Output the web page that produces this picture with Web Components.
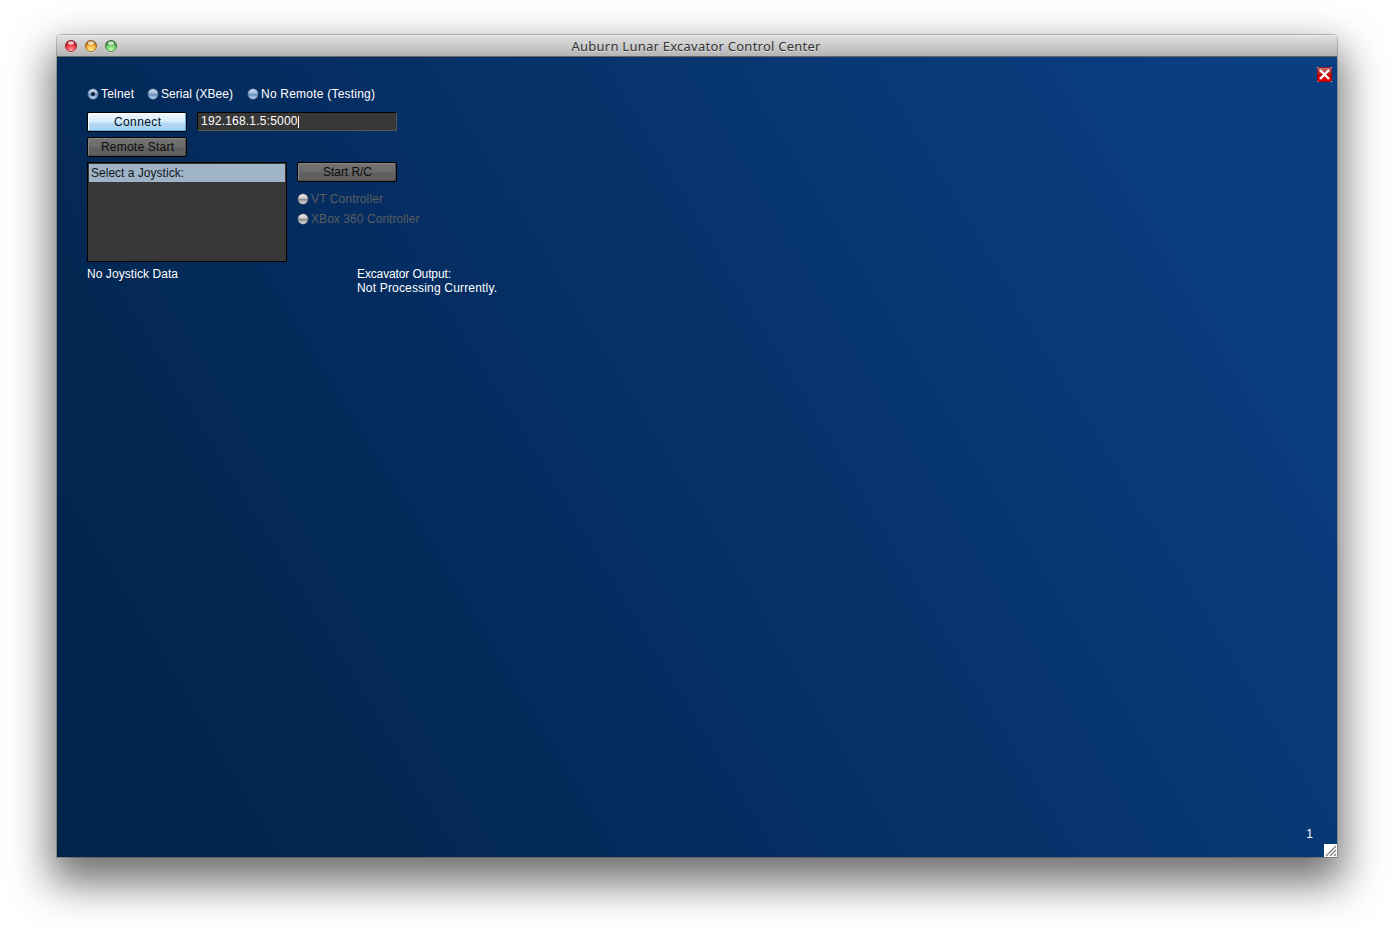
<!DOCTYPE html>
<html lang="en"><head><meta charset="utf-8"><title>Auburn Lunar Excavator Control Center</title>
<style>html,body{margin:0;background:#fff;height:936px;overflow:hidden}body{font:12px/14px "Liberation Sans",Arial,sans-serif}</style></head>
<body>
<control-center></control-center>
<script>
// Text run whose tracking is set so that it spans a given width.
class TrackedText extends HTMLElement{
  connectedCallback(){
    const r=this.attachShadow({mode:'open'});
    r.innerHTML='<style>:host{display:inline-block;white-space:nowrap}span{display:inline-block}</style><span><slot></slot></span>';
    const s=r.querySelector('span'),w=+this.getAttribute('width'),n=this.textContent.length;
    if(w&&n>1){const d=(w-s.getBoundingClientRect().width)/(n-1);s.style.letterSpacing=d+'px';s.style.marginRight=-d+'px';}
  }
}
customElements.define('tracked-text',TrackedText);
class RadioOption extends HTMLElement{
  connectedCallback(){
    const off=this.hasAttribute('disabled'),on=this.hasAttribute('checked');
    this.attachShadow({mode:'open'}).innerHTML=`<style>
    :host{display:flex;align-items:center;height:14px;color:${off?'#5b5d61':'#fff'}}
    svg{width:12px;height:12px;flex:none;margin-right:2px}</style>
    <svg viewBox="0 0 12 12"><defs><linearGradient id="g" x2="0" y2="1">${off?
    '<stop stop-color="#f4f4f4"/><stop offset=".42" stop-color="#cacaca"/><stop offset=".55" stop-color="#8c8c8c"/><stop offset="1" stop-color="#eee"/>':
    '<stop stop-color="#d5e3f2"/><stop offset=".42" stop-color="#9db9d8"/><stop offset=".55" stop-color="#668fbd"/><stop offset="1" stop-color="#c5def4"/>'}
    </linearGradient></defs><circle cx="6" cy="6" r="5.2" fill="url(#g)" stroke="${off?'#484b50':'#476487'}" stroke-width=".6"/>${on?'<circle cx="6" cy="6" r="2" fill="#071d38"/>':''}</svg><slot></slot>`;
  }
}
customElements.define('radio-option',RadioOption);
class PushButton extends HTMLElement{
  connectedCallback(){
    const p=this.hasAttribute('primary');
    this.attachShadow({mode:'open'}).innerHTML=`<style>
    :host{display:flex;justify-content:center;box-sizing:border-box;width:100px;height:20px;border:1px solid #000;border-radius:2px;padding:2px 0 0 1px;line-height:14px;color:${p?'#001020':'#0c0c0c'};
    background:${p?'linear-gradient(#f0f8fe,#d6ebfa 50%,#b5d9f4 56%,#a4d1f2)':'linear-gradient(#747474,#6b6b6b 49%,#5e5e5e 56%,#606060)'};
    box-shadow:${p?'inset 1px 1px #fff,inset -1px -1px #63b0e8':'inset 1px 1px #858585,inset -1px -1px #505050'}}</style><slot></slot>`;
  }
}
customElements.define('push-button',PushButton);
class TextEntry extends HTMLElement{
  connectedCallback(){
    this.attachShadow({mode:'open'}).innerHTML=`<style>
    :host{display:flex;box-sizing:border-box;width:200px;height:19px;border:1px solid;border-color:#000 #555 #555 #000;background:#383838;color:#fff;padding:1px 0 0 3px;line-height:14px}
    i{width:1px;height:12px;margin-top:2px;background:#fff}</style><slot></slot><i></i>`;
  }
}
customElements.define('text-entry',TextEntry);
class SelectList extends HTMLElement{
  connectedCallback(){
    this.attachShadow({mode:'open'}).innerHTML=`<style>
    :host{display:block;box-sizing:border-box;width:200px;height:100px;border:1px solid #000;background:#383838;padding:1px}
    div{height:16px;padding:2px 0 0 2px;line-height:14px;background:#a0b4c8;color:#101820}</style><div><slot></slot></div>`;
  }
}
customElements.define('select-list',SelectList);
class TitleBar extends HTMLElement{
  connectedCallback(){
    const light=(id,a,b,c)=>`<svg viewBox="0 0 14 14"><defs><radialGradient id="${id}" cy=".88" r=".8"><stop stop-color="${a}"/><stop offset=".6" stop-color="${b}"/><stop offset="1" stop-color="${c}"/></radialGradient></defs><circle cx="7" cy="7.6" r="6" fill="#eee"/><circle cx="7" cy="7" r="5.6" fill="url(#${id})" stroke="${c}" stroke-width=".8"/><ellipse cx="7" cy="4" rx="3" ry="1.7" fill="#fff" opacity=".75"/></svg>`;
    this.attachShadow({mode:'open'}).innerHTML=`<style>
    :host{display:grid;grid-template-columns:89px 1fr 91px;height:22px;box-sizing:border-box;border-bottom:1px solid #666;border-radius:4px 4px 0 0;background:linear-gradient(#f0f0f0,#dedede 8%,#b4b4b4);font:13px/22px "Lucida Grande","Noto Sans","Open Sans",sans-serif;color:#333;text-shadow:0 1px rgba(255,255,255,.5)}
    nav{display:flex;gap:6px;padding:4px 0 0 7px}svg{width:14px;height:14px}div{text-align:center}</style>
    <nav>${light('r','#ffabab','#f03440','#8a1720')}${light('y','#fff19d','#f4ae3a','#8d5817')}${light('v','#ceffb2','#70cc6b','#286b2a')}</nav><div><slot></slot></div>`;
  }
}
customElements.define('title-bar',TitleBar);
class ControlCenter extends HTMLElement{
  connectedCallback(){
    this.attachShadow({mode:'open'}).innerHTML=`<style>
    :host{display:block;padding:35px 57px 79px}
    .window{width:1280px;height:822px;border-radius:4px 4px 0 0;box-shadow:0 0 0 1px rgba(0,0,0,.22),0 20px 42px 6px rgba(0,0,0,.56)}
    main{height:800px;display:grid;grid-template-columns:1fr 14px;background:linear-gradient(59deg,#02234a,#032750 18%,#052d61 40%,#07346d 60%,#0a3d80 88%,#0a3e83)}
    .panel{padding:30px 0 0 30px;color:#fff}
    .radios{display:flex;height:14px}.radios>:nth-child(1){width:60px}.radios>:nth-child(2){width:100px}
    .row{display:flex;gap:10px}.connect{margin-top:11px}.remote{margin-top:5px}.joy{margin-top:5px}
    .side radio-option{margin-top:10px}.side radio-option+radio-option{margin-top:6px}
    .output{display:grid;grid-template-columns:270px auto;margin-top:5px;line-height:14px}.output div{display:flex;flex-direction:column;align-items:flex-start}
    aside{display:flex;flex-direction:column;justify-content:space-between;padding:10px 0 0;align-items:flex-end}
    svg{display:block}.close{margin-right:5px}.foot{display:flex;flex-direction:column;align-items:flex-end;color:#fff}.foot span{margin:0 24px 3px 0}
    </style>
    <div class="window"><title-bar><tracked-text width="249">Auburn Lunar Excavator Control Center</tracked-text></title-bar>
    <main><section class="panel">
      <div class="radios"><radio-option checked><tracked-text width="33">Telnet</tracked-text></radio-option><radio-option><tracked-text width="72">Serial (XBee)</tracked-text></radio-option><radio-option><tracked-text width="114">No Remote (Testing)</tracked-text></radio-option></div>
      <div class="row connect"><push-button primary><tracked-text width="47">Connect</tracked-text></push-button><text-entry><tracked-text width="96.5">192.168.1.5:5000</tracked-text></text-entry></div>
      <push-button class="remote"><tracked-text width="73">Remote Start</tracked-text></push-button>
      <div class="row joy"><select-list><tracked-text width="93">Select a Joystick:</tracked-text></select-list>
      <div class="side"><push-button><tracked-text width="49">Start R/C</tracked-text></push-button><radio-option disabled><tracked-text width="72">VT Controller</tracked-text></radio-option><radio-option disabled><tracked-text width="108.5">XBox 360 Controller</tracked-text></radio-option></div></div>
      <div class="output"><tracked-text width="91">No Joystick Data</tracked-text><div><tracked-text width="94">Excavator Output:</tracked-text><tracked-text width="140">Not Processing Currently.</tracked-text></div></div>
    </section><aside>
      <svg class="close" width="15" height="15" viewBox="0 0 15 15"><defs><linearGradient id="c" x2="0" y2="1"><stop stop-color="#c97b80"/><stop offset=".45" stop-color="#b82028"/><stop offset=".5" stop-color="#c80000"/><stop offset="1" stop-color="#f00000"/></linearGradient></defs><path fill="#fff" d="M0 0h1v1H0zM14 0h1v1h-1zM0 14h1v1H0zM14 14h1v1h-1z"/><rect x=".5" y=".5" width="14" height="14" rx="1" fill="url(#c)" stroke="#a80000" stroke-width=".7"/><path d="M3 3l9 9m0-9l-9 9" stroke="#fff" stroke-width="2.4"/></svg>
      <div class="foot"><span>1</span><svg width="13" height="13" viewBox="0 0 13 13"><path fill="#fff" d="M0 0h13v13H0z"/><path d="M2 12L12 2M6 12l6-6M10 12l2-2" stroke="#777" stroke-width="1.1"/></svg></div>
    </aside></main></div>`;
  }
}
customElements.define('control-center',ControlCenter);
</script></body></html>
